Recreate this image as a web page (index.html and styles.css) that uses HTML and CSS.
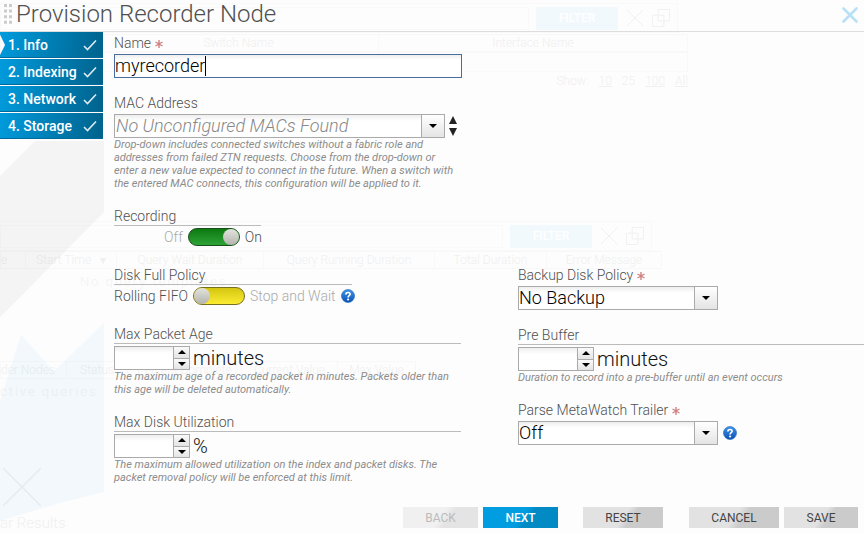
FILE: index.html
```html
<!DOCTYPE html>
<html lang="en">
<head>
<meta charset="utf-8">
<title>Provision Recorder Node</title>
<link rel="stylesheet" href="styles.css">
</head>
<body>
<svg width="0" height="0" class="defs">
  <defs>
    <linearGradient id="blue" x1="0" y1="0" x2="0" y2="1">
      <stop offset="0" stop-color="#3f97ea"/>
      <stop offset="1" stop-color="#0a50b4"/>
    </linearGradient>
    <symbol id="check" viewBox="0 0 14 12"><path d="M1 7L4.500 10.500L13 1.500" fill="none" stroke="#dcebf2" stroke-width="1.600"/></symbol>
    <symbol id="help" viewBox="0 0 14 14">
      <circle cx="7" cy="7" r="6.500" fill="url(#blue)" stroke="#1a62bb" stroke-width=".6"/>
      <path d="M4.900 5.500C4.900 2.800 9.200 2.900 9.100 5.300C9 6.700 7.100 6.700 7.100 8.400" fill="none" stroke="#fff" stroke-width="1.700"/>
      <circle cx="7.100" cy="10.500" r="1.100" fill="#fff"/>
    </symbol>
    <symbol id="cross" viewBox="0 0 18 18"><path d="M1 1L17 17M17 1L1 17" fill="none" stroke="currentColor"/></symbol>
    <symbol id="copy" viewBox="0 0 19 19"><path d="M6.500 .5h12v12h-12zM.5 6.500h12v12h-12z" fill="none" stroke="currentColor"/></symbol>
    <symbol id="star" viewBox="0 0 8 8"><path d="M4 0V8M.5 2L7.500 6M7.500 2L.5 6" fill="none" stroke="#d08080" stroke-width="1.400"/></symbol>
  </defs>
</svg>

<!-- page under the dialog -->
<div class="under" aria-hidden="true">
  <div class="bar bar1"><span class="box"></span><span class="filter">FILTER</span><svg class="ic"><use href="#cross"/></svg><svg class="ic"><use href="#copy"/></svg></div>
  <div class="row row1"><span>Switch Name</span><span>Interface Name</span></div>
  <div class="empty1"></div>
  <div class="show"><span>Show:</span><u>10</u><span>25</span><u>100</u><u>All</u></div>
  <div class="bar bar2"><span class="box"></span><span class="filter">FILTER</span><svg class="ic"><use href="#cross"/></svg><svg class="ic"><use href="#copy"/></svg></div>
  <div class="row row2"><span>e</span><span>Start Time &nbsp; ▾</span><span>Query Wait Duration</span><span>Query Running Duration</span><span>Total Duration</span><span>Error Message</span></div>
  <div class="msg msg2">No query templates</div>
  <div class="row row3"><span>der Nodes</span><span>Status</span><span>Percent Complete</span><span>Current Value</span><span>Max Value</span></div>
  <div class="msg">ctive queries</div>
  <svg class="clear" viewBox="0 0 38 38"><path d="M0 0L38 38M38 0L0 38" stroke="currentColor" stroke-width="1.500"/></svg>
  <div class="results">ar Results</div>
</div>

<form class="dialog">
  <header>
    <svg class="grip" width="8" height="20" viewBox="0 0 8 20"><path d="M1.500 0V20M6.500 0V20" stroke="#ccc" stroke-width="3" stroke-dasharray="3 2.600"/></svg>
    <h1>Provision Recorder Node</h1>
    <button type="button" class="close" aria-label="Close"><svg width="16" height="16" viewBox="0 0 16 16"><path d="M1.500 1.500L14.500 14.500M14.500 1.500L1.500 14.500" stroke="#b8e0f6" stroke-width="2.600" stroke-linecap="round"/></svg></button>
  </header>
  <div class="main">
    <nav>
      <button type="button" class="step current">1. Info<svg><use href="#check"/></svg></button>
      <button type="button" class="step">2. Indexing<svg><use href="#check"/></svg></button>
      <button type="button" class="step">3. Network<svg><use href="#check"/></svg></button>
      <button type="button" class="step">4. Storage<svg><use href="#check"/></svg></button>
      <svg class="deco" viewBox="0 0 104 392" preserveAspectRatio="none">
        <path d="M35 1H104V72L0 177V36z" fill="#000" fill-opacity=".035"/>
        <path d="M0 260L21 194L54 231L104 182V351L60 362L0 380z" fill="#0090e0" fill-opacity=".045"/>
      </svg>
    </nav>
    <div class="fields">
      <div class="left">
        <div class="field name">
          <label for="name">Name <svg class="star"><use href="#star"/></svg></label>
          <div class="typing"><input type="text" id="name" class="text" value="myrecorder"></div>
        </div>
        <div class="field mac">
          <label for="mac">MAC Address</label>
          <div class="line">
            <div class="combo wide"><input type="text" id="mac" placeholder="No Unconfigured MACs Found"><button type="button" aria-label="Open list"><i class="down"></i></button></div>
            <svg class="sort" width="8" height="20" viewBox="0 0 8 20"><path d="M4 0L8 8H0zM4 20L8 12H0z" fill="#222"/></svg>
          </div>
          <p>Drop-down includes connected switches without a fabric role and addresses from failed ZTN requests. Choose from the drop-down or enter a new value expected to connect in the future. When a switch with the entered MAC connects, this configuration will be applied to it.</p>
        </div>
        <div class="field recording">
          <label for="rec" class="ruled">Recording</label>
          <div class="toggle end"><span class="dim">Off</span><input type="checkbox" id="rec" class="switch green" checked><span>On</span></div>
        </div>
        <div class="field policy">
          <label for="full" class="ruled">Disk Full Policy</label>
          <div class="toggle"><span>Rolling FIFO</span><input type="checkbox" id="full" class="switch yellow"><span class="dim">Stop and Wait</span><svg class="help"><use href="#help"/></svg></div>
        </div>
        <div class="field age">
          <label for="age" class="ruled">Max Packet Age</label>
          <div class="line"><div class="spin"><input type="text" id="age"><div><button type="button" aria-label="Increase"><i class="up"></i></button><button type="button" aria-label="Decrease"><i class="down"></i></button></div></div><span class="unit">minutes</span></div>
          <p>The maximum age of a recorded packet in minutes. Packets older than this age will be deleted automatically.</p>
        </div>
        <div class="field">
          <label for="util" class="ruled">Max Disk Utilization</label>
          <div class="line"><div class="spin"><input type="text" id="util"><div><button type="button" aria-label="Increase"><i class="up"></i></button><button type="button" aria-label="Decrease"><i class="down"></i></button></div></div><span class="unit">%</span></div>
          <p>The maximum allowed utilization on the index and packet disks. The packet removal policy will be enforced at this limit.</p>
        </div>
      </div>
      <div class="right">
        <div class="field backup">
          <label for="backup">Backup Disk Policy <svg class="star"><use href="#star"/></svg></label>
          <div class="combo"><select id="backup"><option>No Backup</option></select><span class="arrow"><i class="down"></i></span></div>
        </div>
        <div class="field buffer">
          <label for="buffer" class="ruled">Pre Buffer</label>
          <div class="line"><div class="spin"><input type="text" id="buffer"><div><button type="button" aria-label="Increase"><i class="up"></i></button><button type="button" aria-label="Decrease"><i class="down"></i></button></div></div><span class="unit">minutes</span></div>
          <p>Duration to record into a pre-buffer until an event occurs</p>
        </div>
        <div class="field">
          <label for="trailer">Parse MetaWatch Trailer <svg class="star"><use href="#star"/></svg></label>
          <div class="line"><div class="combo"><select id="trailer"><option>Off</option></select><span class="arrow"><i class="down"></i></span></div><svg class="help"><use href="#help"/></svg></div>
        </div>
      </div>
    </div>
  </div>
  <footer>
    <button type="button" class="btn" disabled>BACK</button>
    <button type="button" class="btn next">NEXT</button>
    <button type="reset" class="btn reset">RESET</button>
    <button type="button" class="btn cancel">CANCEL</button>
    <button type="submit" class="btn save">SAVE</button>
  </footer>
</form>
</body>
</html>
```

FILE: styles.css
```css
* {
	box-sizing: border-box;
}
body {
	margin: 0;
	background: #fdfdfd;
	font-family: Roboto, "Liberation Sans", sans-serif;
	font-size: 14px;
	font-weight: 300;
	color: #505050;
	overflow: hidden;
}
button, input, select {
	font: inherit;
	color: inherit;
	margin: 0;
	border-radius: 0;
	outline: none;
}
.defs {
	position: absolute;
}

/* faded page under the dialog */
.under {
	position: absolute;
	top: 0;
	left: 0;
	z-index: -1;
	width: 100%;
	color: #f0f0f0;
	font-size: 12px;
}
.bar {
	display: flex;
	align-items: center;
	gap: 7px;
	height: 30px;
	padding-right: 7px;
	border: 1px solid #f9f9f9;
	border-left: 0;
}
.bar1 {
	width: 678px;
	margin-top: 3px;
}
.bar2 {
	width: 652px;
	margin-top: 131px;
}
.bar .box {
	flex: 1;
	height: 23px;
	border: 1px solid #f9f9f9;
}
.filter {
	width: 82px;
	background: #f2f9fd;
	color: #fff;
	font-weight: 500;
	line-height: 23px;
	text-align: center;
}
.bar .ic {
	width: 18px;
	height: 18px;
	margin-left: 1px;
}
.row {
	display: grid;
	height: 18px;
	line-height: 17px;
	border: 1px solid #f8f8f8;
	text-align: center;
	white-space: nowrap;
}
.row span + span {
	border-left: 1px solid #f8f8f8;
}
.row1 {
	width: 688px;
	margin-top: 1px;
	grid-template-columns: 377px 1fr;
}
.row1 span:first-child {
	padding-left: 98px;
}
.empty1 {
	width: 688px;
	height: 20px;
	border: 1px solid #f9f9f9;
}
.show {
	display: flex;
	justify-content: flex-end;
	gap: 10px;
	width: 688px;
	height: 18px;
	line-height: 18px;
}
.row2 {
	width: 662px;
	grid-template-columns: 24px 91px 147px 171px 112px 1fr;
}
.row2 span:first-child {
	text-align: left;
}
.msg {
	letter-spacing: 2px;
	line-height: 26px;
	height: 26px;
	font-size: 13px;
	color: #f3f3f3;
}
.msg2 {
	padding-left: 80px;
}
.row3 {
	width: 416px;
	margin-top: 66px;
	grid-template-columns: 65px 61px 114px 96px 1fr;
}
.row3 span:first-child {
	text-align: left;
}
.clear {
	display: block;
	width: 38px;
	height: 38px;
	margin: 63px 0 0 3px;
}
.results {
	margin-top: 8px;
	font-size: 15px;
}

/* dialog */
.dialog {
	display: flex;
	flex-direction: column;
	min-height: 100vh;
}
.dialog header {
	display: flex;
	align-items: center;
	height: 32px;
	padding: 0 6px 3px 4px;
	border-bottom: 1px solid #ddd;
}
h1 {
	flex: 1;
	margin: 0 0 0 4px;
	font-size: 24px;
	line-height: 28px;
	font-weight: 300;
}
.close {
	border: 0;
	padding: 2px 0 0;
	background: none;
	line-height: 0;
}
.main {
	display: flex;
	flex: 1;
	margin-bottom: -26px;
}
nav {
	display: flex;
	flex-direction: column;
	gap: 1px;
	width: 104px;
	flex: none;
}
.step {
	display: flex;
	align-items: center;
	justify-content: space-between;
	width: 103px;
	height: 26px;
	padding: 0 6px 0 8px;
	border: 0;
	border-bottom: 1px solid #026a9b;
	background: linear-gradient(100deg, #009bdd, #00628c);
	color: #fff;
	font-weight: 500;
}
.step svg {
	width: 14px;
	height: 12px;
}
/* notch pointing at the open step */
.step.current {
	clip-path: polygon(0 0, 100% 0, 100% 100%, 0 100%, 0 88%, 5px 50%, 0 10%);
}
.deco {
	flex: 1;
	width: 104px;
	min-height: 0;
}
.fields {
	display: flex;
	flex: 1;
	padding-left: 10px;
}
.left {
	flex: 0 0 348px;
	padding-top: 3px;
	margin-right: 56px;
}
.right {
	flex: 1;
	padding-top: 235px;
}
.field label {
	display: block;
	line-height: 17px;
	margin-bottom: 2px;
}
.field label.ruled {
	border-bottom: 1px solid #bbb;
	line-height: 18px;
}
.left .ruled {
	margin-right: 1px;
}
.star {
	width: 8px;
	height: 8px;
}
.field p {
	margin: 0;
	font-size: 11px;
	line-height: 13px;
	font-style: italic;
	font-weight: 400;
	color: #8c8c8c;
}
.line {
	display: flex;
	align-items: center;
}
.text {
	display: block;
	width: 100%;
	height: 24px;
	padding: 0 0 2px;
	border: 1px solid #4a6d9f;
	background: linear-gradient(#eee, #fff 5px);
	font-size: 18px;
	color: #000;
}
.typing {
	position: relative;
}
.typing::after {
	content: "";
	position: absolute;
	top: 2px;
	left: 91px;
	width: 1px;
	height: 20px;
	background: #000;
}
.combo {
	display: flex;
	width: 200px;
	height: 24px;
	border: 1px solid #aaa;
	background: linear-gradient(#eee, #fff 6px);
	color: #000;
}
.combo.wide {
	width: 331px;
}
.combo input, .combo select {
	flex: 1;
	min-width: 0;
	border: 0;
	padding: 0 0 1px;
	background: none;
	font-size: 18px;
	appearance: none;
}
.combo input {
	padding: 0 1px 2px;
}
.combo input::placeholder {
	color: #888;
	font-style: italic;
	opacity: 1;
}
.combo button, .arrow {
	display: flex;
	align-items: center;
	justify-content: center;
	width: 23px;
	border: 0;
	border-left: 1px solid #aaa;
	padding: 0;
	background: linear-gradient(#fff, #e4e4e4);
}
.up, .down {
	width: 0;
	height: 0;
	border: 4px solid transparent;
}
.down {
	border-top-color: #000;
	border-bottom: 0;
}
.up {
	border-bottom-color: #000;
	border-top: 0;
}
.sort {
	margin-left: 4px;
}
.help {
	width: 14px;
	height: 14px;
	margin-left: 5px;
}
.toggle {
	display: flex;
	align-items: center;
	height: 20px;
	gap: 5px;
	white-space: nowrap;
}
.toggle.end {
	justify-content: flex-end;
}
.toggle .help {
	flex: none;
	margin-left: 0;
}
.dim {
	color: #aaa;
}
.switch {
	appearance: none;
	display: flex;
	flex: none;
	width: 52px;
	height: 18px;
	border: 1px solid #333;
	border-radius: 9px;
}
.switch::before {
	content: "";
	width: 16px;
	height: 16px;
	border-radius: 8px;
	background: linear-gradient(#e4e4de, #b4b4ae);
}
.switch:checked {
	justify-content: flex-end;
}
.green {
	background: linear-gradient(#0d7a12, #2da336);
	border-color: #174f1a;
}
.yellow {
	background: linear-gradient(#d4c512, #fbec31);
	border-color: #77701d;
}
.spin {
	display: flex;
	width: 76px;
	height: 24px;
	border: 1px solid #aaa;
	background: linear-gradient(#eee, #fff 6px);
}
.spin input {
	flex: 1;
	min-width: 0;
	border: 0;
	padding: 0 2px;
	background: none;
	font-size: 18px;
}
.spin div {
	display: flex;
	flex-direction: column;
	width: 16px;
	border-left: 1px solid #aaa;
}
.spin button {
	display: flex;
	flex: 1;
	align-items: center;
	justify-content: center;
	border: 0;
	padding: 0;
	background: linear-gradient(#fafafa, #e4e4e4);
}
.spin button + button {
	border-top: 1px solid #aaa;
}
.unit {
	margin-left: 3px;
	font-size: 20px;
	line-height: 24px;
	color: #111;
}
.name, .mac {
	margin-bottom: 17px;
}
.recording {
	width: 148px;
	margin-bottom: 19px;
}
.policy {
	width: 239px;
	margin-bottom: 19px;
}
.recording .ruled, .policy .ruled {
	margin-bottom: 1px;
}
.age {
	margin-bottom: 17px;
}
.backup {
	margin-bottom: 16px;
}
.buffer {
	margin-bottom: 18px;
}

/* buttons */
footer {
	display: flex;
	justify-content: flex-end;
	padding: 0 6px 5px 0;
}
.btn {
	width: 75px;
	height: 21px;
	margin-left: 5px;
	border: 0;
	padding: 0;
	background: linear-gradient(125deg, #e2e2e2 50%, #cbcbcb 60%);
	font-size: 12px;
	font-weight: 400;
	color: #444;
}
.btn:disabled {
	background: linear-gradient(125deg, #f0f0f0 50%, #e4e4e4 60%);
	color: #bbb;
}
.btn.next {
	background: linear-gradient(125deg, #009de0 50%, #028ac4 60%);
	color: #fff;
	font-weight: 500;
}
.btn.reset {
	width: 80px;
	margin-left: 25px;
}
.btn.cancel {
	width: 90px;
	margin-left: 26px;
}
.btn.save {
	width: 74px;
}
```
